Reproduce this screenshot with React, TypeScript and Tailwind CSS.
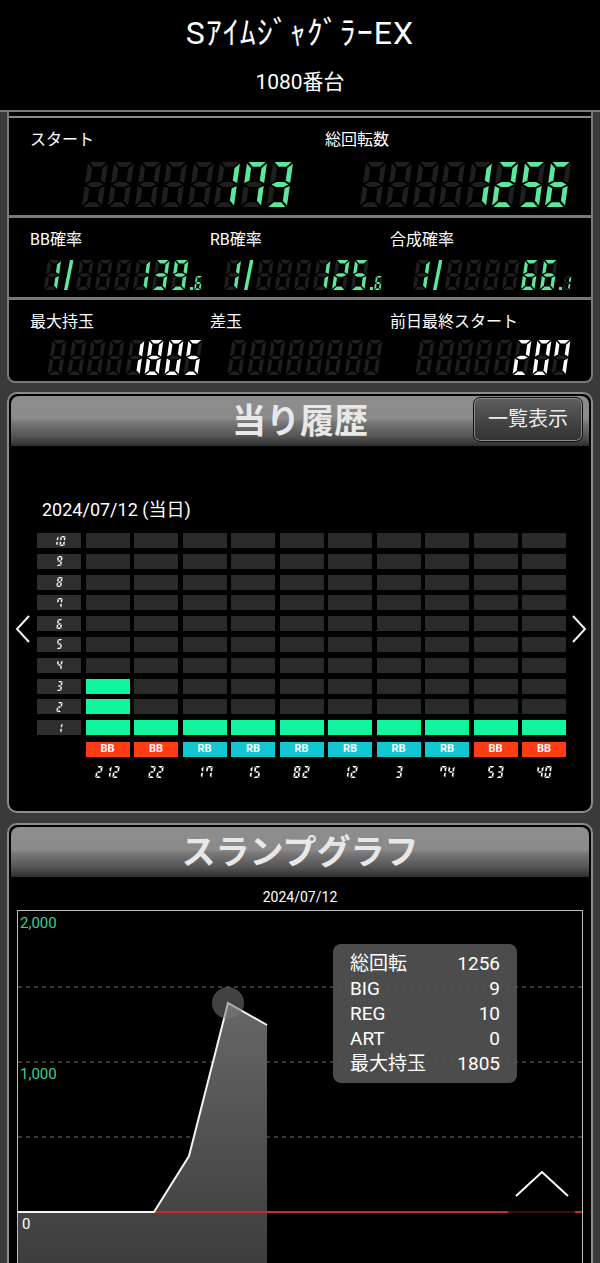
import React from "react"

const SEG: Record<string, string> = {
  "0": "abcdef",
  "1": "bc",
  "2": "abdeg",
  "3": "abcdg",
  "4": "bcfg",
  "5": "acdfg",
  "6": "acdefg",
  "7": "abcf",
  "8": "abcdefg",
  "9": "abcdfg",
}

const DIM = "#1f1f1f"
const GREEN = "#5ae89c"

type SegProps = { ch: string; w: number; h: number; t: number; on: string; off?: string; className?: string }

// single 7-segment digit, slanted a little like the real display
function Seg7({ ch, w, h, t, on, off = DIM, className = "" }: SegProps) {
  const lit = SEG[ch] ?? ""
  const m = h / 2
  const g = t * 0.3
  const ht = t / 2
  const P: Record<string, number[][]> = {
    a: [[g, 0], [w - g, 0], [w - g - t, t], [g + t, t]],
    b: [[w, g], [w, m - g], [w - t, m - g - ht], [w - t, g + t]],
    c: [[w, m + g], [w, h - g], [w - t, h - g - t], [w - t, m + g + ht]],
    d: [[g + t, h - t], [w - g - t, h - t], [w - g, h], [g, h]],
    e: [[0, m + g], [t, m + g + ht], [t, h - g - t], [0, h - g]],
    f: [[0, g], [t, g + t], [t, m - g - ht], [0, m - g]],
    g: [[g, m], [g + t, m - ht], [w - g - t, m - ht], [w - g, m], [w - g - t, m + ht], [g + t, m + ht]],
  }
  return (
    <svg width={w} height={h} className={`shrink-0 overflow-visible ${className}`}>
      <g transform={`translate(${0.14 * m} 0) skewX(-8)`}>
        {Object.entries(P).map(([s, pts]) =>
          lit.includes(s) || off !== "none" ? (
            <polygon key={s} points={pts.map((p) => p.join(",")).join(" ")} fill={lit.includes(s) ? on : off} />
          ) : null
        )}
      </g>
    </svg>
  )
}

type DispProps = { value: string; len: number; w: number; h: number; t: number; gap: number; on: string }

function Display({ value, len, w, h, t, gap, on }: DispProps) {
  const chars = value.padStart(len, " ").split("")
  return (
    <div className="flex" style={{ gap }}>
      {chars.map((c, i) => (
        <Seg7 key={i} ch={c} w={w} h={h} t={t} on={on} />
      ))}
    </div>
  )
}

function Ratio({ value, frac, len }: { value: string; frac: string; len: number }) {
  const chars = value.padStart(len, " ").split("")
  return (
    <div className="flex items-end">
      <Seg7 ch="1" w={13} h={30} t={3.4} on={GREEN} className="mr-[5px]" />
      <svg width={9} height={30} className="mr-[5px] shrink-0">
        <polygon points="6,0 9.5,0 3.5,30 0,30" fill={GREEN} />
      </svg>
      <div className="flex gap-[5.5px]">
        {chars.map((c, i) => (
          <Seg7 key={i} ch={c} w={13.5} h={30} t={3.4} on={GREEN} />
        ))}
      </div>
      <div className="ml-[3px] mr-[2px] h-[3px] w-[3px] bg-[#5ae89c]" />
      <Seg7 ch={frac} w={6.5} h={14} t={1.8} on={GREEN} />
    </div>
  )
}

const label = "text-[16px] leading-[22px] text-white"

function StatsPanel() {
  return (
    <section className="mx-[7px] rounded-b-[8px] border-x-2 border-b-2 border-[#7a7a7a] bg-black">
      <div className="h-[4px]" />
      <div className="flex h-[99px] border-t-2 border-[#8a8a8a]">
        <div className="flex w-[291px] flex-col pt-[11px] pl-[21px] pr-[10px]">
          <span className={label}>スタート</span>
          <div className="mt-[11px] flex justify-end">
            <Display value="173" len={8} w={20} h={45} t={4.8} gap={6.5} on={GREEN} />
          </div>
        </div>
        <div className="flex flex-1 flex-col pt-[11px] pl-[25px] pr-[23px]">
          <span className={label}>総回転数</span>
          <div className="mt-[11px] flex justify-end">
            <Display value="1256" len={8} w={20} h={45} t={4.8} gap={6.5} on={GREEN} />
          </div>
        </div>
      </div>
      <div className="flex h-[82px] border-t-[3px] border-[#777]">
        <div className="flex w-[201px] flex-col pt-[11px] pl-[21px] pr-[9px]">
          <span className={label}>BB確率</span>
          <div className="mt-[9px] flex justify-end">
            <Ratio value="139" frac="6" len={6} />
          </div>
        </div>
        <div className="flex w-[180px] flex-col pt-[11px] pr-[9px]">
          <span className={label}>RB確率</span>
          <div className="mt-[9px] flex justify-end">
            <Ratio value="125" frac="6" len={6} />
          </div>
        </div>
        <div className="flex flex-1 flex-col pt-[11px] pr-[21px]">
          <span className={label}>合成確率</span>
          <div className="mt-[9px] flex justify-end">
            <Ratio value="66" frac="1" len={6} />
          </div>
        </div>
      </div>
      <div className="flex h-[84px] border-t-[3px] border-[#777]">
        <div className="flex w-[201px] flex-col pt-[11px] pl-[21px] pr-[10px]">
          <span className={label}>最大持玉</span>
          <div className="mt-[7px] flex justify-end">
            <Display value="1805" len={8} w={14} h={35} t={3.6} gap={5.4} on="#ffffff" />
          </div>
        </div>
        <div className="flex w-[180px] flex-col pt-[11px] pr-[10px]">
          <span className={label}>差玉</span>
          <div className="mt-[7px] flex justify-end">
            <Display value="" len={8} w={14} h={35} t={3.6} gap={5.4} on="#ffffff" />
          </div>
        </div>
        <div className="flex flex-1 flex-col pt-[11px] pr-[23px]">
          <span className={label}>前日最終スタート</span>
          <div className="mt-[7px] flex justify-end">
            <Display value="207" len={8} w={14} h={35} t={3.6} gap={5.4} on="#ffffff" />
          </div>
        </div>
      </div>
    </section>
  )
}

function PanelHeader({ title, button }: { title: string; button?: string }) {
  return (
    <div className="mx-[2px] mt-[2px] grid h-[50px] grid-cols-[1fr_auto_1fr] items-center rounded-t-[8px] bg-[linear-gradient(180deg,#8e8e8e_0%,#8a8a8a_46%,#787878_52%,#555555_80%,#2e2e2e_100%)]">
      <div />
      <h2 className="text-[34px] font-bold leading-[42px] text-[#e8e8e8]">{title}</h2>
      <div className="flex justify-end pr-[6px]">
        {button && (
          <button className="mt-[-4px] h-[45px] w-[110px] rounded-[7px] border border-[#111] bg-[linear-gradient(180deg,#5e5e5e_0%,#444_55%,#333_100%)] text-[20px] text-[#ececec] shadow-[inset_0_0_0_1px_#8a8a8a]">
            {button}
          </button>
        )}
      </div>
    </div>
  )
}

const counts = [3, 1, 1, 1, 1, 1, 1, 1, 1, 1]
const kinds = ["BB", "BB", "RB", "RB", "RB", "RB", "RB", "RB", "BB", "BB"]
const games = ["212", "22", "17", "15", "82", "12", "3", "74", "53", "40"]

function SmallNum({ value, h, w, t, gap }: { value: string; h: number; w: number; t: number; gap: number }) {
  return (
    <div className="flex" style={{ gap }}>
      {value.split("").map((c, i) => (
        <Seg7 key={i} ch={c} w={w} h={h} t={t} on="#ffffff" off="none" />
      ))}
    </div>
  )
}

function Chevron({ dir }: { dir: "left" | "right" }) {
  return (
    <svg width="16" height="28" viewBox="0 0 16 28" className="shrink-0">
      <polyline
        points={dir === "left" ? "14,1 2,14 14,27" : "2,1 14,14 2,27"}
        fill="none"
        stroke="#f2f2f2"
        strokeWidth="2"
      />
    </svg>
  )
}

function HistoryPanel() {
  const rows = [10, 9, 8, 7, 6, 5, 4, 3, 2, 1]
  return (
    <section className="mx-[7px] mt-[9px] rounded-[10px] border-2 border-[#8c8c8c] bg-black">
      <PanelHeader title="当り履歴" button="一覧表示" />
      <p className="mt-[52px] pl-[33px] text-[18px] leading-[24px] text-white">2024/07/12 (当日)</p>
      <div className="mt-[11px] flex items-start pb-[33px]">
        <div className="flex w-[28px] justify-center pt-[82px]">
          <Chevron dir="left" />
        </div>
        <div className="grid grid-cols-[repeat(11,44px)] gap-x-[4.5px] gap-y-[5.8px]">
          {rows.map((r) => (
            <React.Fragment key={r}>
              <div className="flex h-[15px] items-center justify-center bg-[#2e2e2e]">
                <SmallNum value={String(r)} h={10} w={5} t={1.5} gap={1.5} />
              </div>
              {counts.map((c, i) => (
                <div key={i} className={`h-[15px] ${c >= r ? "bg-[#10f59e]" : "bg-[#2a2a2a]"}`} />
              ))}
            </React.Fragment>
          ))}
          <div className="mt-[1px]" />
          {kinds.map((k, i) => (
            <div
              key={i}
              className={`mt-[1px] flex h-[15px] items-center justify-center text-[11px] font-bold text-white ${
                k === "BB" ? "bg-[#ff3c12]" : "bg-[#12c6d2]"
              }`}
            >
              {k}
            </div>
          ))}
          <div />
          {games.map((n, i) => (
            <div key={i} className="mt-[3px] flex h-[12px] justify-center">
              <SmallNum value={n} h={12} w={6} t={1.7} gap={2.5} />
            </div>
          ))}
        </div>
        <div className="flex flex-1 justify-center pt-[82px]">
          <Chevron dir="right" />
        </div>
      </div>
    </section>
  )
}

function SlumpPanel() {
  const line = "0,301 136,301 171,245 210,92 249,114"
  return (
    <section className="mx-[7px] mt-[10px] rounded-t-[10px] border-x-2 border-t-2 border-[#8c8c8c] bg-black">
      <PanelHeader title="スランプグラフ" />
      <p className="mt-[10px] text-center text-[14px] leading-[20px] text-white">2024/07/12</p>
      <div className="relative mx-[8px] mt-[3px] border border-[#bdbdbd]">
        <svg width="564" height="360" className="block">
          <defs>
            <linearGradient id="fill" x1="0" y1="92" x2="0" y2="360" gradientUnits="userSpaceOnUse">
              <stop offset="0" stopColor="#676767" />
              <stop offset="0.75" stopColor="#464646" />
              <stop offset="1" stopColor="#3c3c3c" />
            </linearGradient>
          </defs>
          {[76, 151, 226].map((y) => (
            <line key={y} x1="0" x2="564" y1={y} y2={y} stroke="#6e6e6e" strokeDasharray="4 4" />
          ))}
          <polygon points={`${line} 249,360 0,360`} fill="url(#fill)" />
          <line x1="0" x2="564" y1="301" y2="301" stroke="#c62a2a" strokeWidth="2" />
          <polyline points={line} fill="none" stroke="#f4f4f4" strokeWidth="2" />
          <circle cx="210" cy="92" r="16" fill="rgba(120,120,120,0.55)" />
          <text x="2" y="17" fill="#3fcf8e" fontSize="15">2,000</text>
          <text x="2" y="168" fill="#3fcf8e" fontSize="15">1,000</text>
          <text x="4" y="318" fill="#ffffff" fontSize="15">0</text>
        </svg>
        <div className="absolute left-[315px] top-[33px] w-[184px] rounded-[8px] bg-[rgba(84,84,84,0.9)] py-[7px] pl-[17px] pr-[17px] text-[19px] leading-[25px] text-white">
          {[
            ["総回転", "1256"],
            ["BIG", "9"],
            ["REG", "10"],
            ["ART", "0"],
            ["最大持玉", "1805"],
          ].map(([k, v]) => (
            <div key={k} className="flex justify-between">
              <span>{k}</span>
              <span>{v}</span>
            </div>
          ))}
        </div>
      </div>
      <div className="h-[20px]" />
    </section>
  )
}

export default function App() {
  return (
    <div className="relative min-h-screen overflow-hidden bg-[#3a3a3a] font-['Roboto','Noto_Sans_CJK_JP',sans-serif] text-white">
      <header className="flex h-[112px] flex-col items-center border-b-2 border-[#7a7a7a] bg-black">
        <h1 className="mt-[13px] text-[32px] leading-[40px] tracking-[1px]">SｱｲﾑｼﾞｬｸﾞﾗｰEX</h1>
        <p className="mt-[16px] text-[21px] leading-[26px]">1080番台</p>
      </header>
      <StatsPanel />
      <HistoryPanel />
      <SlumpPanel />
      <button className="absolute left-[508px] top-[1150px] flex h-[67px] w-[67px] items-center justify-center bg-[rgba(0,0,0,0.7)]">
        <svg width="54" height="28" viewBox="0 0 54 28">
          <polyline points="1,26 27,2 53,26" fill="none" stroke="#ffffff" strokeWidth="2" />
        </svg>
      </button>
    </div>
  )
}
